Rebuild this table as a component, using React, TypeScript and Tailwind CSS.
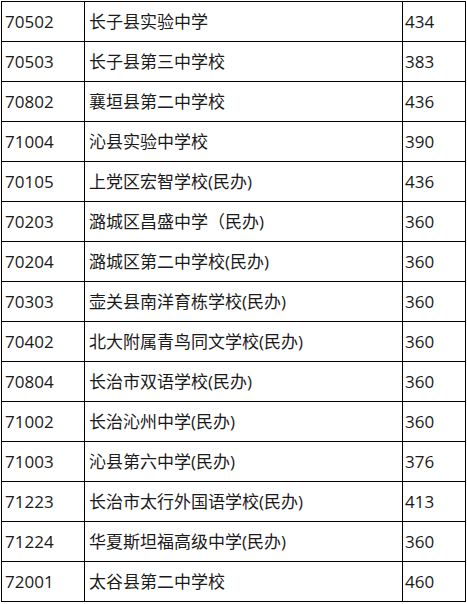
const rows: [string, string, string][] = [
  ["70502", "长子县实验中学", "434"],
  ["70503", "长子县第三中学校", "383"],
  ["70802", "襄垣县第二中学校", "436"],
  ["71004", "沁县实验中学校", "390"],
  ["70105", "上党区宏智学校(民办)", "436"],
  ["70203", "潞城区昌盛中学（民办)", "360"],
  ["70204", "潞城区第二中学校(民办)", "360"],
  ["70303", "壶关县南洋育栋学校(民办)", "360"],
  ["70402", "北大附属青鸟同文学校(民办)", "360"],
  ["70804", "长治市双语学校(民办)", "360"],
  ["71002", "长治沁州中学(民办)", "360"],
  ["71003", "沁县第六中学(民办)", "376"],
  ["71223", "长治市太行外国语学校(民办)", "413"],
  ["71224", "华夏斯坦福高级中学(民办)", "360"],
  ["72001", "太谷县第二中学校", "460"],
];

export default function App() {
  return (
    <div className="w-[467px] h-[604px] bg-white pl-px pt-px">
      <table
        className="table-fixed border-collapse text-[17px] text-[#1a1a1a]"
        style={{ fontFamily: '"Open Sans", "Noto Sans CJK SC", sans-serif' }}
      >
        <colgroup>
          <col className="w-[83px]" />
          <col className="w-[318px]" />
          <col className="w-[63px]" />
        </colgroup>
        <tbody>
          {rows.map(([code, name, score]) => (
            <tr key={code} className="h-[40px]">
              <td className="border border-black pl-[3px] leading-none">{code}</td>
              <td className="border border-black pl-[4px] leading-none whitespace-nowrap">{name}</td>
              <td className="border border-black pl-[2px] leading-none">{score}</td>
            </tr>
          ))}
        </tbody>
      </table>
    </div>
  );
}
